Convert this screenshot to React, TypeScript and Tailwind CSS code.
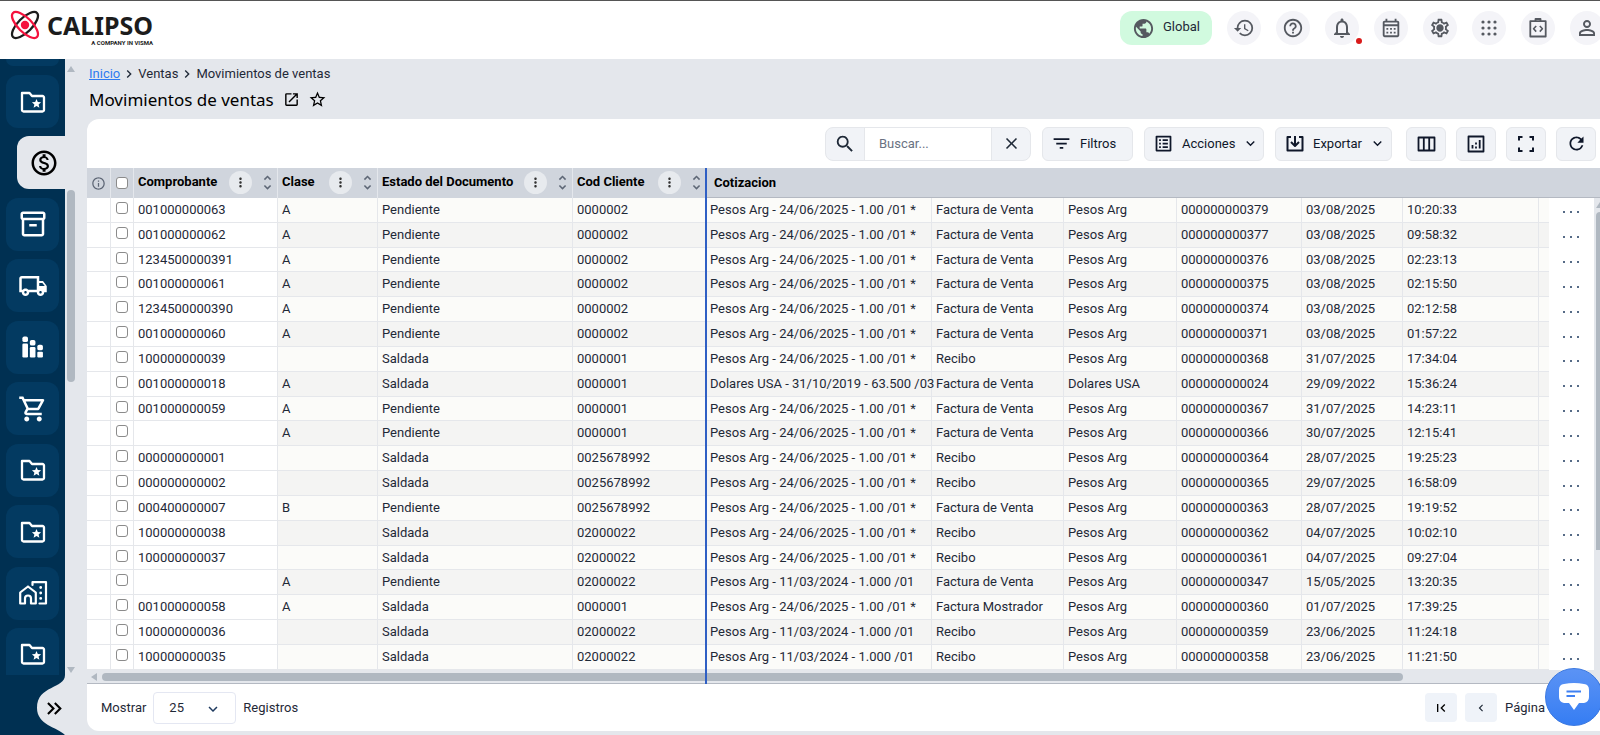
import React, { useState } from 'react';
import {
  MdPublic, MdHistory, MdHelpOutline, MdNotificationsNone, MdOutlineCalendarMonth, MdOutlineSettings,
  MdPersonOutline, MdOutlineMonetizationOn, MdOutlineInventory2, MdOutlineLocalShipping,
  MdOutlineShoppingCart, MdSearch, MdClose, MdFilterList, MdListAlt, MdRefresh, MdOpenInNew,
  MdStarBorder, MdUnfoldMore, MdMoreVert, MdInfoOutline, MdKeyboardDoubleArrowRight,
  MdFirstPage, MdChevronLeft, MdChevronRight, MdKeyboardArrowDown,
} from 'react-icons/md';

type Row = [string, string, string, string, string, string, string, string, string, string];

const PESOS = 'Pesos Arg - 24/06/2025 - 1.00 /01 *';
const PESOS_OLD = 'Pesos Arg - 11/03/2024 - 1.000 /01';

const rows: Row[] = [
  ['001000000063', 'A', 'Pendiente', '0000002', PESOS, 'Factura de Venta', 'Pesos Arg', '000000000379', '03/08/2025', '10:20:33'],
  ['001000000062', 'A', 'Pendiente', '0000002', PESOS, 'Factura de Venta', 'Pesos Arg', '000000000377', '03/08/2025', '09:58:32'],
  ['1234500000391', 'A', 'Pendiente', '0000002', PESOS, 'Factura de Venta', 'Pesos Arg', '000000000376', '03/08/2025', '02:23:13'],
  ['001000000061', 'A', 'Pendiente', '0000002', PESOS, 'Factura de Venta', 'Pesos Arg', '000000000375', '03/08/2025', '02:15:50'],
  ['1234500000390', 'A', 'Pendiente', '0000002', PESOS, 'Factura de Venta', 'Pesos Arg', '000000000374', '03/08/2025', '02:12:58'],
  ['001000000060', 'A', 'Pendiente', '0000002', PESOS, 'Factura de Venta', 'Pesos Arg', '000000000371', '03/08/2025', '01:57:22'],
  ['100000000039', '', 'Saldada', '0000001', PESOS, 'Recibo', 'Pesos Arg', '000000000368', '31/07/2025', '17:34:04'],
  ['001000000018', 'A', 'Saldada', '0000001', 'Dolares USA - 31/10/2019 - 63.500 /03', 'Factura de Venta', 'Dolares USA', '000000000024', '29/09/2022', '15:36:24'],
  ['001000000059', 'A', 'Pendiente', '0000001', PESOS, 'Factura de Venta', 'Pesos Arg', '000000000367', '31/07/2025', '14:23:11'],
  ['', 'A', 'Pendiente', '0000001', PESOS, 'Factura de Venta', 'Pesos Arg', '000000000366', '30/07/2025', '12:15:41'],
  ['000000000001', '', 'Saldada', '0025678992', PESOS, 'Recibo', 'Pesos Arg', '000000000364', '28/07/2025', '19:25:23'],
  ['000000000002', '', 'Saldada', '0025678992', PESOS, 'Recibo', 'Pesos Arg', '000000000365', '29/07/2025', '16:58:09'],
  ['000400000007', 'B', 'Pendiente', '0025678992', PESOS, 'Factura de Venta', 'Pesos Arg', '000000000363', '28/07/2025', '19:19:52'],
  ['100000000038', '', 'Saldada', '02000022', PESOS, 'Recibo', 'Pesos Arg', '000000000362', '04/07/2025', '10:02:10'],
  ['100000000037', '', 'Saldada', '02000022', PESOS, 'Recibo', 'Pesos Arg', '000000000361', '04/07/2025', '09:27:04'],
  ['', 'A', 'Pendiente', '02000022', PESOS_OLD, 'Factura de Venta', 'Pesos Arg', '000000000347', '15/05/2025', '13:20:35'],
  ['001000000058', 'A', 'Saldada', '0000001', PESOS, 'Factura Mostrador', 'Pesos Arg', '000000000360', '01/07/2025', '17:39:25'],
  ['100000000036', '', 'Saldada', '02000022', PESOS_OLD, 'Recibo', 'Pesos Arg', '000000000359', '23/06/2025', '11:24:18'],
  ['100000000035', '', 'Saldada', '02000022', PESOS_OLD, 'Recibo', 'Pesos Arg', '000000000358', '23/06/2025', '11:21:50'],
];

const FolderStar = () => (
  <svg width="28" height="28" viewBox="0 0 28 28" fill="none">
    <path d="M3 5h7.500l2.500 3H23.500a1.500 1.500 0 0 1 1.500 1.500V22a1.500 1.500 0 0 1-1.500 1.500H4.500A1.500 1.500 0 0 1 3 22V5.500z" stroke="currentColor" strokeWidth="2.300" strokeLinejoin="round" />
    <path d="M17.500 11l1.300 3 3.300.3-2.500 2.200.8 3.200-2.900-1.700-2.900 1.700.8-3.200-2.500-2.200 3.300-.3z" fill="currentColor" />
  </svg>
);

const StackedBars = () => (
  <svg width="28" height="28" viewBox="0 0 24 24" fill="currentColor">
    <rect x="2.900" y="9" width="4.800" height="12" rx="1" />
    <rect x="2.900" y="3" width="4.800" height="4.800" rx="1.600" />
    <rect x="9.300" y="12" width="4.800" height="9" rx="1" />
    <rect x="9.300" y="6" width="4.800" height="4.800" rx="1.600" />
    <rect x="15.700" y="16" width="4.800" height="5" rx="1" />
    <rect x="15.700" y="10" width="4.800" height="4.800" rx="1.600" />
  </svg>
);

const HomeBuilding = () => (
  <svg width="30" height="26" viewBox="0 0 30 26" fill="none" stroke="currentColor" strokeWidth="2.200" strokeLinecap="round" strokeLinejoin="round">
    <path d="M2.200 12.500 10 6.500l7.800 6V23.500H13V18.500a3 3 0 0 0-6 0V23.500H2.200z" />
    <path d="M14.500 5V2.200H28V23.500H21.500" />
    <path d="M22.700 7.500v.1M22.700 13v.1M22.700 18.300v.1" strokeWidth="2.800" />
  </svg>
);

const DotGrid = () => (
  <svg width="18" height="18" viewBox="0 0 18 18" fill="currentColor">
    {[3, 9, 15].map((y) => [3, 9, 15].map((x) => <circle key={`${x}-${y}`} cx={x} cy={y} r="1.6" />))}
  </svg>
);

const ClipboardCode = () => (
  <svg width="20" height="22" viewBox="0 0 20 22" fill="none" stroke="currentColor" strokeWidth="1.800" strokeLinejoin="round">
    <path d="M2.300 4.200H17.700V19.500H2.300zM7.500 4V2H12.500V4" />
    <path d="M8.200 9l-2.600 2.800 2.600 2.800M11.800 9l2.600 2.800-2.600 2.800" strokeWidth="1.600" />
  </svg>
);

const ExportIcon = () => (
  <svg width="20" height="18" viewBox="0 0 20 18" fill="none" stroke="currentColor" strokeWidth="2" strokeLinejoin="round">
    <path d="M6 2H2.500V15.500H17.500V2H14" />
    <path d="M10 1V10.500M6 7l4 4 4-4" />
  </svg>
);

const ColumnsIcon = () => (
  <svg width="19" height="16" viewBox="0 0 19 16" fill="none" stroke="currentColor" strokeWidth="1.800" strokeLinejoin="round">
    <path d="M1.500 1.500h16v13h-16zM6.800 1.500v13M12.200 1.500v13" />
  </svg>
);

const ChartIcon = () => (
  <svg width="18" height="18" viewBox="0 0 18 18" fill="none" stroke="currentColor" strokeWidth="1.800" strokeLinejoin="round">
    <path d="M1.500 1.500h15v15h-15z" />
    <path d="M5.500 10v3.500M9 11.500v2M9 7.500v2M12.700 5v8.500" />
  </svg>
);

const ExpandIcon = () => (
  <svg width="18" height="18" viewBox="0 0 18 18" fill="none" stroke="currentColor" strokeWidth="2">
    <path d="M2 5.500V2h3.500M12.500 2H16v3.500M16 12.500V16h-3.500M5.500 16H2v-3.500" />
  </svg>
);

const SettingsIcon = () => (
  <span className="relative">
    <MdOutlineSettings size={22} />
    <span className="absolute inset-2 rounded-full bg-current" />
  </span>
);

const Logo = () => (
  <a href="#" aria-label="Calipso" className="flex items-start">
    <svg width="32" height="32" viewBox="0 0 32 32" fill="none" strokeWidth="2.300" strokeLinecap="round">
      <ellipse cx="16" cy="16" rx="17" ry="7" transform="rotate(-45 16 16)" stroke="#1c1c1c" />
      <ellipse cx="16" cy="16" rx="17" ry="7" transform="rotate(45 16 16)" stroke="#f5123d" />
      <circle cx="16" cy="16" r="4.200" fill="#f5123d" />
    </svg>
    <span className="ml-[6px] flex flex-col items-end pt-1 text-[#1c1c1c]">
      <span className="font-['Noto_Sans',sans-serif] text-[25px] leading-6 font-bold">CALIPSO</span>
      <span className="mt-0.5 text-[6px] leading-2 font-bold">A COMPANY IN VISMA</span>
    </span>
  </a>
);

const topIcons = [
  { label: 'Historial', icon: <MdHistory size={22} /> },
  { label: 'Ayuda', icon: <MdHelpOutline size={22} /> },
  { label: 'Notificaciones', icon: <MdNotificationsNone size={24} />, dot: true },
  { label: 'Calendario', icon: <MdOutlineCalendarMonth size={22} /> },
  { label: 'Ajustes', icon: <SettingsIcon /> },
  { label: 'Aplicaciones', icon: <DotGrid /> },
  { label: 'Integraciones', icon: <ClipboardCode /> },
  { label: 'Perfil', icon: <MdPersonOutline size={24} /> },
];

const sideItems = [
  { label: 'Favoritos', icon: <FolderStar /> },
  { label: 'Ventas', icon: <MdOutlineMonetizationOn size={30} />, active: true },
  { label: 'Inventario', icon: <MdOutlineInventory2 size={30} /> },
  { label: 'Logística', icon: <MdOutlineLocalShipping size={30} /> },
  { label: 'Reportes', icon: <StackedBars /> },
  { label: 'Compras', icon: <MdOutlineShoppingCart size={30} /> },
  { label: 'Carpeta 1', icon: <FolderStar /> },
  { label: 'Carpeta 2', icon: <FolderStar /> },
  { label: 'Sucursales', icon: <HomeBuilding /> },
  { label: 'Carpeta 3', icon: <FolderStar /> },
];

const Sidebar = () => (
  <aside className="flex w-[65px] shrink-0 flex-col bg-[#003052] text-white">
    <div className="mx-[6px] mb-[9px] h-[7px] shrink-0 rounded-b-lg bg-[#033a61]" />
    <nav className="flex min-h-0 flex-1 flex-col justify-between overflow-hidden">
      {sideItems.map((item, i) =>
        item.active ? (
          <button key={item.label} aria-label={item.label} className="ml-[17px] flex h-[53px] shrink-0 items-center rounded-l-xl bg-[#e4e7ec] pl-3 text-black">
            {item.icon}
          </button>
        ) : (
          <button
            key={item.label}
            aria-label={item.label}
            className={`mx-[6px] flex shrink-0 items-center justify-center bg-[#033a61] ${i === sideItems.length - 1 ? 'h-[47px] rounded-t-xl pt-1.5' : 'h-[53px] rounded-xl'}`}
          >
            {item.icon}
          </button>
        )
      )}
    </nav>
    <button aria-label="Expandir menú" className="relative h-[60px] shrink-0 text-black">
      <svg className="absolute top-0 right-0" width="28" height="60" viewBox="0 0 28 60">
        <path d="M28 0C28 14 0 10 0 33C0 50 20 52 28 60Z" fill="#e4e7ec" />
      </svg>
      <MdKeyboardDoubleArrowRight size={25} className="absolute top-[21px] -right-0.5" />
    </button>
  </aside>
);

const SideScrollbar = () => (
  <div className="flex w-3 shrink-0 flex-col items-center pt-[7px] pb-[62px]">
    <div className="h-0 w-0 border-x-4 border-b-6 border-x-transparent border-b-[#b0b8c1]" />
    <div className="mt-[118px] h-48 w-2 rounded-full bg-[#b0b8c1]" />
    <div className="mt-auto h-0 w-0 border-x-4 border-t-6 border-x-transparent border-t-[#b0b8c1]" />
  </div>
);

const toolButton = 'flex h-[34px] items-center rounded-md border border-[#e5e7eb] bg-[#f1f3f7] text-[#0f172a]';

const Toolbar = () => {
  const [query, setQuery] = useState('');

  return (
    <div className="flex h-[49px] shrink-0 items-center justify-end pr-1">
      <div className="mr-[11px] flex h-[34px] overflow-hidden rounded-lg border border-[#e5e7eb] bg-[#f1f3f7]">
        <button aria-label="Buscar" className="flex w-[38px] items-center justify-center"><MdSearch size={22} /></button>
        <input
          aria-label="Texto a buscar"
          className="w-32 border-x border-[#e5e7eb] bg-white px-[14px] text-[13px] outline-none placeholder:text-gray-500"
          placeholder="Buscar..."
          value={query}
          onChange={(e) => setQuery(e.target.value)}
        />
        <button aria-label="Limpiar" onClick={() => setQuery('')} className="flex w-[38px] items-center justify-center"><MdClose size={19} /></button>
      </div>
      <button className={`${toolButton} mr-[11px] w-[91px] gap-2 pl-2`}><MdFilterList size={21} />Filtros</button>
      <button className={`${toolButton} mr-[11px] w-[120px] pl-2`}><MdListAlt size={21} className="mr-2" />Acciones<MdKeyboardArrowDown size={17} className="ml-[7px]" /></button>
      <button className={`${toolButton} mr-[14px] w-[117px] pl-[9px]`}><span className="mr-2"><ExportIcon /></span>Exportar<MdKeyboardArrowDown size={17} className="ml-[7px]" /></button>
      <div className="flex gap-[10px]">
        <button aria-label="Columnas" className={`${toolButton} w-10 justify-center`}><ColumnsIcon /></button>
        <button aria-label="Gráficos" className={`${toolButton} w-10 justify-center`}><ChartIcon /></button>
        <button aria-label="Pantalla completa" className={`${toolButton} w-10 justify-center`}><ExpandIcon /></button>
        <button aria-label="Actualizar" className={`${toolButton} w-10 justify-center`}><MdRefresh size={21} /></button>
      </div>
    </div>
  );
};

const HeaderCell = ({ title }: { title: string }) => (
  <th className="border-r border-[#e4e7ec] pb-0.5 pl-1">
    <div className="flex items-center">
      <span className="flex-1 text-left whitespace-nowrap">{title}</span>
      <button aria-label={`Menú de ${title}`} className="mr-[6px] flex h-[23px] w-[23px] items-center justify-center rounded-full bg-[#e7eaee] text-[#333]"><MdMoreVert size={15} /></button>
      <button aria-label={`Ordenar por ${title}`} className="text-[#5d6675]"><MdUnfoldMore size={19} /></button>
    </div>
  </th>
);

const check = 'mx-auto block h-3 w-3 appearance-none rounded-[3px] border border-[#8b8b8b] bg-white';

const DataTable = () => (
  <table className="h-full w-full table-fixed border-separate border-spacing-0">
    <colgroup>
      <col className="w-[24px]" />
      <col className="w-[23px]" />
      <col className="w-[144px]" />
      <col className="w-[100px]" />
      <col className="w-[195px]" />
      <col className="w-[134px]" />
      <col className="w-[225px]" />
      <col className="w-[132px]" />
      <col className="w-[113px]" />
      <col className="w-[125px]" />
      <col className="w-[101px]" />
      <col className="w-[136px]" />
      <col />
      <col className="w-[45px]" />
    </colgroup>
    <thead>
      <tr className="h-[30px] bg-[#d0d5dd] text-black">
        <th className="border-r border-[#e4e7ec]"><MdInfoOutline size={15} className="mx-auto text-[#5d6675]" /></th>
        <th className="border-r border-[#e4e7ec]"><input type="checkbox" aria-label="Seleccionar todo" className={check} /></th>
        <HeaderCell title="Comprobante" />
        <HeaderCell title="Clase" />
        <HeaderCell title="Estado del Documento" />
        <HeaderCell title="Cod Cliente" />
        <th colSpan={8} className="border-b border-[#b4b9c2] pl-[7px] text-left">Cotizacion</th>
      </tr>
    </thead>
    <tbody>
      {rows.map((row, i) => (
        <tr key={row[7]} className={i % 2 ? 'bg-[#f4f4f3]' : 'bg-[#fbfbf9]'}>
          <td className="border-r border-b border-[#e5e7eb] bg-white" />
          <td className="border-r border-b border-[#e5e7eb] bg-white pb-1">
            <input type="checkbox" aria-label={`Seleccionar ${row[7]}`} className={check} />
          </td>
          {row.map((value, c) => (
            <td key={c} className={`border-r border-b border-[#e5e7eb] leading-4 whitespace-nowrap ${c === 0 ? 'bg-white' : ''} ${c === 4 ? 'pl-[3px]' : 'pl-1'}`}>
              {value}
            </td>
          ))}
          <td className="border-b border-[#e5e7eb]" />
          <td className="bg-white">
            <button aria-label="Más opciones" className="mx-auto flex gap-[5px] pt-1">
              <span className="h-0.5 w-0.5 rounded-full bg-[#1e3a5f]" />
              <span className="h-0.5 w-0.5 rounded-full bg-[#1e3a5f]" />
              <span className="h-0.5 w-0.5 rounded-full bg-[#1e3a5f]" />
            </button>
          </td>
        </tr>
      ))}
    </tbody>
  </table>
);

const Footer = () => (
  <div className="flex h-[47px] shrink-0 items-center pr-[55px] pl-[14px]">
    <label htmlFor="page-size">Mostrar</label>
    <div className="relative mx-[7px]">
      <select id="page-size" defaultValue="25" className="h-8 w-[83px] appearance-none rounded border border-[#e4e7f2] bg-white pl-[15px]">
        <option>10</option>
        <option>25</option>
        <option>50</option>
      </select>
      <MdKeyboardArrowDown size={18} className="pointer-events-none absolute top-2 right-[14px] text-[#1e3a5f]" />
    </div>
    <span>Registros</span>
    <div className="ml-auto flex items-center gap-2">
      <button aria-label="Primera página" className="flex h-[29px] w-8 items-center justify-center rounded bg-[#eff3f9] text-black"><MdFirstPage size={16} /></button>
      <button aria-label="Página anterior" className="flex h-[29px] w-8 items-center justify-center rounded bg-[#eff3f9]"><MdChevronLeft size={14} /></button>
      <span>Página</span>
    </div>
  </div>
);

const App: React.FC = () => (
  <div className="relative flex h-screen min-h-[735px] flex-col overflow-hidden bg-[#e4e7ec] font-[Roboto,sans-serif] text-[13px] text-[#1f2937]">
    <header className="flex h-[59px] shrink-0 items-center justify-between overflow-hidden border-t border-[#555] bg-white pb-1 pl-[9px]">
      <Logo />
      <div className="-mr-1 flex shrink-0 items-center gap-[15px] text-[#555960]">
        <button className="flex h-[34px] w-[92px] items-center gap-2 rounded-xl bg-[#d1fadf] pl-3">
          <MdPublic size={23} />
          <span className="pb-0.5 text-[#1f2937]">Global</span>
        </button>
        {topIcons.map((item) => (
          <button key={item.label} aria-label={item.label} className="relative flex h-[34px] w-[34px] items-center justify-center rounded-full bg-[#f4f4f8]">
            {item.icon}
            {item.dot && <span className="absolute -right-[3px] bottom-px h-[6px] w-[6px] rounded-full bg-[#d91a1a]" />}
          </button>
        ))}
      </div>
    </header>

    <div className="flex min-h-0 flex-1">
      <Sidebar />
      <SideScrollbar />

      <main className="ml-[10px] flex min-w-0 flex-1 flex-col pb-1">
        <nav aria-label="Ruta" className="mt-[6px] ml-0.5 flex h-[18px] shrink-0 items-center">
          <a href="#" className="text-[#2f7bf0] underline">Inicio</a>
          <MdChevronRight size={16} className="mx-px" />
          <span>Ventas</span>
          <MdChevronRight size={16} className="mx-px" />
          <span>Movimientos de ventas</span>
        </nav>
        <div className="mt-0.5 mb-[5px] ml-0.5 flex h-[29px] shrink-0 items-center text-black">
          <h1 className="mr-[9px] font-['Noto_Sans',sans-serif] text-[17px]">Movimientos de ventas</h1>
          <button aria-label="Abrir en otra pestaña" className="mr-2"><MdOpenInNew size={17} /></button>
          <button aria-label="Agregar a favoritos"><MdStarBorder size={19} /></button>
        </div>

        <section className="flex min-h-0 flex-1 flex-col rounded-l-xl bg-white">
          <Toolbar />
          <div className="relative flex min-h-0 flex-1 flex-col">
            <div className="flex min-h-0 flex-1">
              <div className="min-w-0 flex-1"><DataTable /></div>
              <div className="flex w-[6px] shrink-0 flex-col items-end overflow-hidden bg-[#e4e7ec]">
                <div className="h-[30px] w-full shrink-0 border-b border-[#b4b9c2] bg-[#d0d5dd]" />
                <div className="mt-1 h-0 w-0 border-b-6 border-l-4 border-b-[#b0b8c1] border-l-transparent" />
                <div className="mt-1 h-[338px] w-1 rounded-tl-full bg-[#b0b8c1]" />
              </div>
            </div>
            <div className="flex h-[14px] shrink-0 items-center border-b border-[#b4b9c2] bg-[#e4e7ec] pr-[197px] pl-1">
              <div className="h-0 w-0 border-y-4 border-r-6 border-y-transparent border-r-[#b0b8c1]" />
              <div className="ml-[5px] h-2 flex-1 rounded-full bg-[#b0b8c1]" />
            </div>
            {/* Frozen columns divider */}
            <div className="absolute inset-y-0 left-[618px] w-0.5 bg-[#2f5fc4]" />
          </div>
          <Footer />
        </section>
      </main>
    </div>

    <button aria-label="Abrir chat" className="absolute -right-[3px] bottom-[9px] flex h-[58px] w-[58px] items-center justify-center rounded-full border border-[#3b78e0] bg-linear-to-b from-[#5b93f5] to-[#357df3]">
      <svg width="32" height="32" viewBox="0 0 32 32" fill="none">
        <path d="M6 3Q16 1 26 3Q31 3.500 31 9V16Q31 21 26 22H21L16 29L11 22H6Q1 21 1 16V9Q1 3.500 6 3Z" fill="white" />
        <path d="M8.500 10.500H23M8.500 15H17" stroke="#3f80f2" strokeWidth="2" />
      </svg>
    </button>
  </div>
);

export default App;
